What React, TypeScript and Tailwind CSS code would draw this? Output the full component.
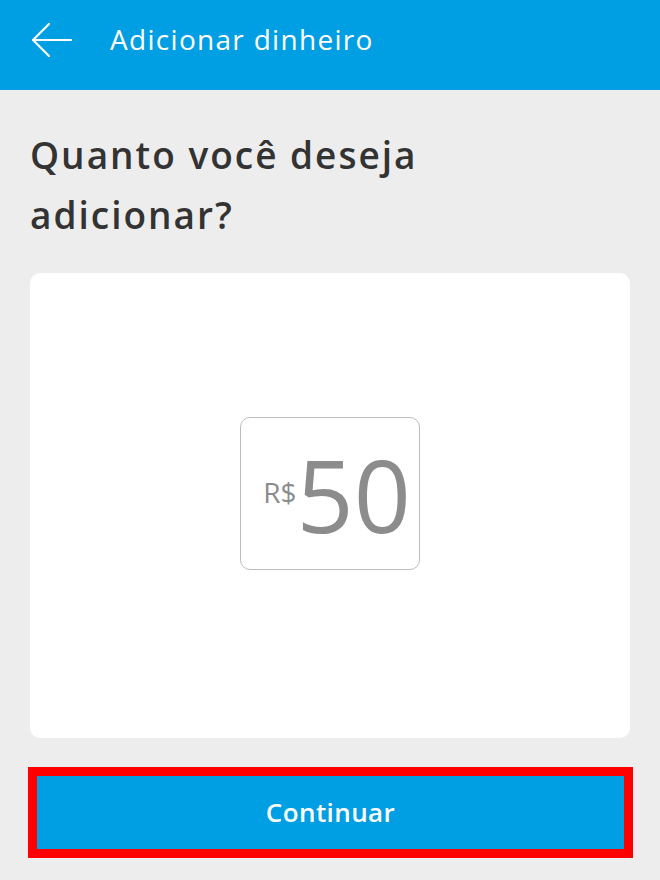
export default function App() {
  return (
    <div className="w-[660px] h-[880px] bg-[#ededed] font-['Open_Sans',sans-serif] overflow-hidden">
      <header className="h-[90px] bg-[#009ee3] flex items-center pb-[12px]">
        <svg
          className="ml-[31px] w-[42px] h-[36px] mt-[2px]"
          viewBox="0 0 42 36"
          fill="none"
          stroke="#ffffff"
          strokeWidth="2.2"
          strokeLinecap="round"
          strokeLinejoin="round"
        >
          <path d="M40 18H3" />
          <path d="M18 2L2 18l16 16" />
        </svg>
        <h1 className="ml-[37px] text-white text-[28px] leading-none tracking-[1.3px]">
          Adicionar dinheiro
        </h1>
      </header>

      <main className="px-[30px]">
        <h2 className="mt-[35px] text-[37px] leading-[60px] font-semibold text-[#333333] tracking-[2px]">
          Quanto você deseja
          <br />
          adicionar?
        </h2>

        <div className="mt-[28px] h-[465px] bg-white rounded-[10px] flex justify-center items-start pt-[144px]">
          <div className="w-[180px] h-[153px] border-[1.5px] border-[#bdbdbd] rounded-[10px] flex items-center justify-center pl-[14px]">
            <span className="text-[28px] text-[#8c8c8c] leading-none mt-[-4px]">R$</span>
            <span className="text-[100px] text-[#8c8c8c] leading-none">50</span>
          </div>
        </div>
      </main>

      <div className="mt-[29px] ml-[28px] w-[605px] h-[91px] border-[9px] border-[#ff0000]">
        <button className="w-full h-full bg-[#009ee3] text-white text-[26px] font-semibold tracking-[0.4px] flex items-center justify-center">
          Continuar
        </button>
      </div>
    </div>
  );
}
